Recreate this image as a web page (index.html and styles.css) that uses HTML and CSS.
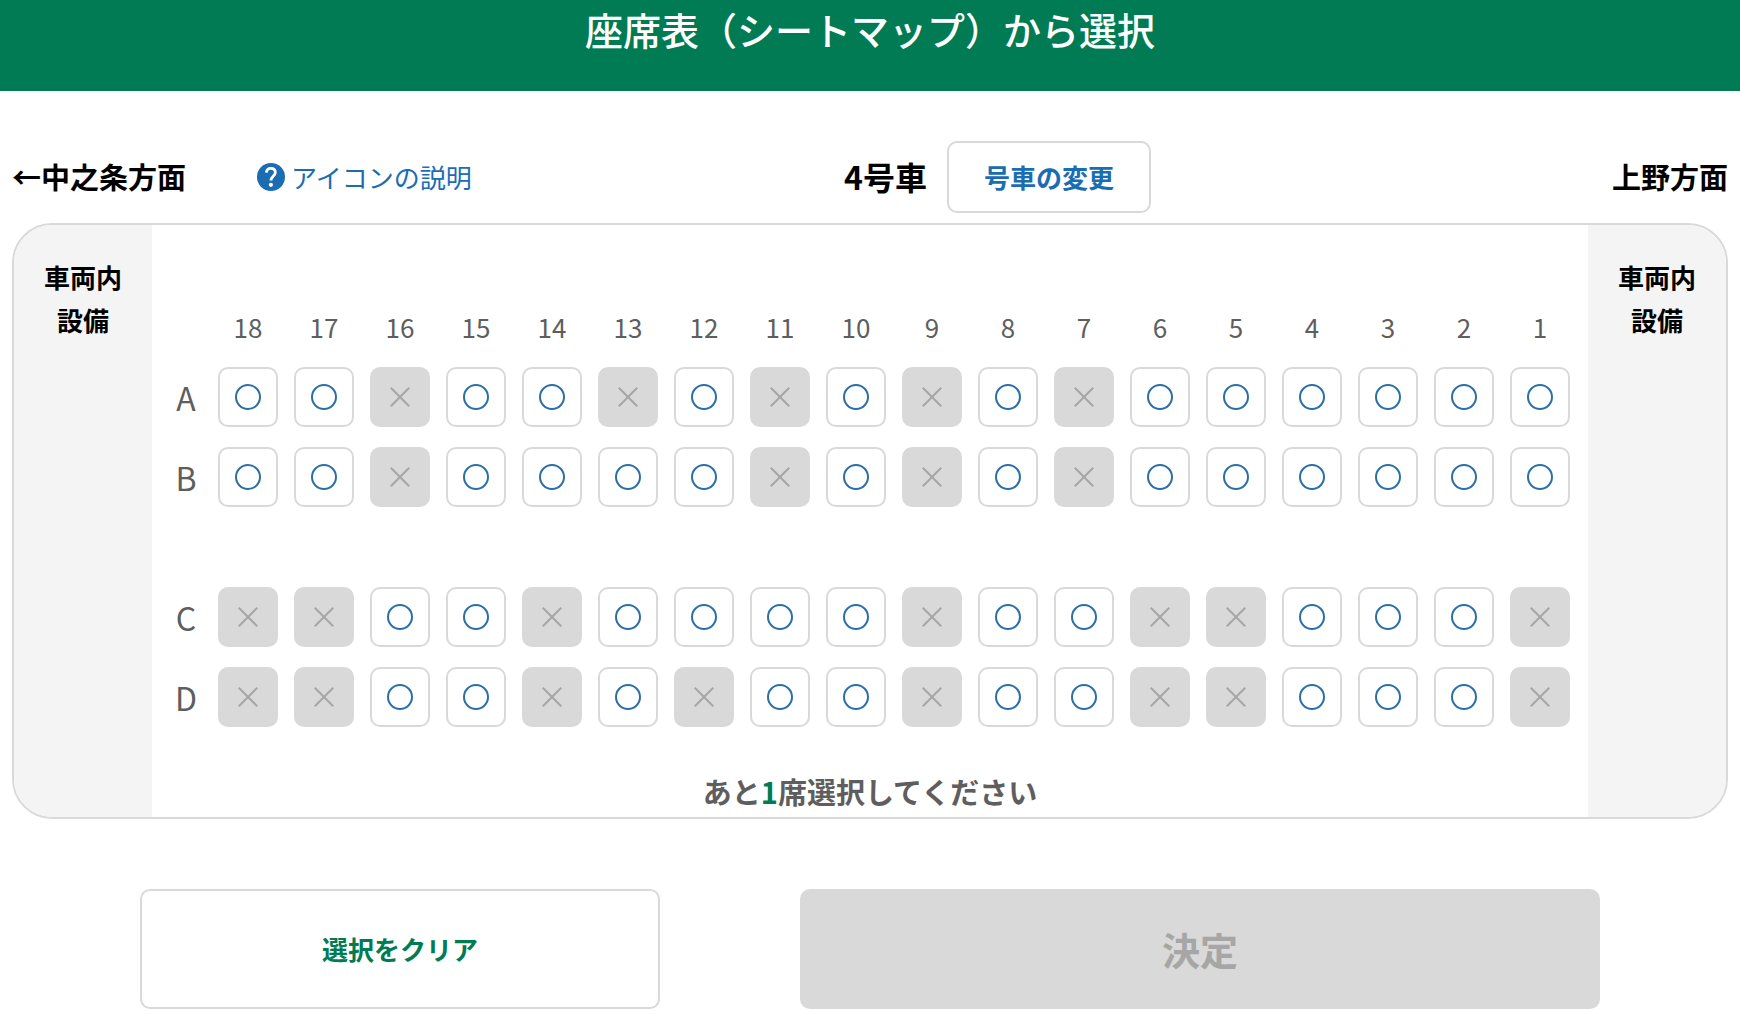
FILE: index.html
```html
<!DOCTYPE html>
<html lang="ja">
<head>
<meta charset="utf-8">
<meta name="viewport" content="width=device-width, initial-scale=1">
<title>座席表（シートマップ）から選択</title>
<link rel="stylesheet" href="styles.css">
</head>
<body>
<header class="page-header">
  <h1 class="page-title">座席表（シートマップ）から選択</h1>
</header>
<main class="content">
  <div class="car-bar">
    <div class="car-bar-left">
      <span class="direction">←中之条方面</span>
      <a class="icon-help" href="#">
        <svg class="help-mark" viewBox="0 0 28 28" aria-hidden="true">
          <circle cx="14" cy="14" r="14" fill="#1a6db3"/>
          <path d="M9.4 9.6C9.5 7 11.2 5.3 13.9 5.3S18.3 6.9 18.3 9.4C18.3 12.8 13.9 13.2 13.9 17.6" fill="none" stroke="#fff" stroke-width="2.8"/>
          <circle cx="13.9" cy="21.8" r="2.1" fill="#fff"/>
        </svg>
        <span>アイコンの説明</span>
      </a>
    </div>
    <div class="car-bar-right">
      <h2 class="car-name">4号車</h2>
      <button class="btn btn-car" type="button">号車の変更</button>
      <span class="direction direction-end">上野方面</span>
    </div>
  </div>

  <section class="car">
    <div class="facility">車両内<br>設備</div>
    <div class="cabin">
      <table class="seats">
        <thead>
          <tr><td></td><th scope="col">18</th><th scope="col">17</th><th scope="col">16</th><th scope="col">15</th><th scope="col">14</th><th scope="col">13</th><th scope="col">12</th><th scope="col">11</th><th scope="col">10</th><th scope="col">9</th><th scope="col">8</th><th scope="col">7</th><th scope="col">6</th><th scope="col">5</th><th scope="col">4</th><th scope="col">3</th><th scope="col">2</th><th scope="col">1</th></tr>
        </thead>
        <tbody>
          <tr>
            <th class="row-name" scope="row">A</th>
            <td><button class="seat" type="button" aria-label="18A"></button></td>
            <td><button class="seat" type="button" aria-label="17A"></button></td>
            <td><button class="seat" type="button" aria-label="16A" disabled></button></td>
            <td><button class="seat" type="button" aria-label="15A"></button></td>
            <td><button class="seat" type="button" aria-label="14A"></button></td>
            <td><button class="seat" type="button" aria-label="13A" disabled></button></td>
            <td><button class="seat" type="button" aria-label="12A"></button></td>
            <td><button class="seat" type="button" aria-label="11A" disabled></button></td>
            <td><button class="seat" type="button" aria-label="10A"></button></td>
            <td><button class="seat" type="button" aria-label="9A" disabled></button></td>
            <td><button class="seat" type="button" aria-label="8A"></button></td>
            <td><button class="seat" type="button" aria-label="7A" disabled></button></td>
            <td><button class="seat" type="button" aria-label="6A"></button></td>
            <td><button class="seat" type="button" aria-label="5A"></button></td>
            <td><button class="seat" type="button" aria-label="4A"></button></td>
            <td><button class="seat" type="button" aria-label="3A"></button></td>
            <td><button class="seat" type="button" aria-label="2A"></button></td>
            <td><button class="seat" type="button" aria-label="1A"></button></td>
          </tr>
          <tr>
            <th class="row-name" scope="row">B</th>
            <td><button class="seat" type="button" aria-label="18B"></button></td>
            <td><button class="seat" type="button" aria-label="17B"></button></td>
            <td><button class="seat" type="button" aria-label="16B" disabled></button></td>
            <td><button class="seat" type="button" aria-label="15B"></button></td>
            <td><button class="seat" type="button" aria-label="14B"></button></td>
            <td><button class="seat" type="button" aria-label="13B"></button></td>
            <td><button class="seat" type="button" aria-label="12B"></button></td>
            <td><button class="seat" type="button" aria-label="11B" disabled></button></td>
            <td><button class="seat" type="button" aria-label="10B"></button></td>
            <td><button class="seat" type="button" aria-label="9B" disabled></button></td>
            <td><button class="seat" type="button" aria-label="8B"></button></td>
            <td><button class="seat" type="button" aria-label="7B" disabled></button></td>
            <td><button class="seat" type="button" aria-label="6B"></button></td>
            <td><button class="seat" type="button" aria-label="5B"></button></td>
            <td><button class="seat" type="button" aria-label="4B"></button></td>
            <td><button class="seat" type="button" aria-label="3B"></button></td>
            <td><button class="seat" type="button" aria-label="2B"></button></td>
            <td><button class="seat" type="button" aria-label="1B"></button></td>
          </tr>
          <tr><td class="aisle" colspan="19"></td></tr>
          <tr>
            <th class="row-name" scope="row">C</th>
            <td><button class="seat" type="button" aria-label="18C" disabled></button></td>
            <td><button class="seat" type="button" aria-label="17C" disabled></button></td>
            <td><button class="seat" type="button" aria-label="16C"></button></td>
            <td><button class="seat" type="button" aria-label="15C"></button></td>
            <td><button class="seat" type="button" aria-label="14C" disabled></button></td>
            <td><button class="seat" type="button" aria-label="13C"></button></td>
            <td><button class="seat" type="button" aria-label="12C"></button></td>
            <td><button class="seat" type="button" aria-label="11C"></button></td>
            <td><button class="seat" type="button" aria-label="10C"></button></td>
            <td><button class="seat" type="button" aria-label="9C" disabled></button></td>
            <td><button class="seat" type="button" aria-label="8C"></button></td>
            <td><button class="seat" type="button" aria-label="7C"></button></td>
            <td><button class="seat" type="button" aria-label="6C" disabled></button></td>
            <td><button class="seat" type="button" aria-label="5C" disabled></button></td>
            <td><button class="seat" type="button" aria-label="4C"></button></td>
            <td><button class="seat" type="button" aria-label="3C"></button></td>
            <td><button class="seat" type="button" aria-label="2C"></button></td>
            <td><button class="seat" type="button" aria-label="1C" disabled></button></td>
          </tr>
          <tr>
            <th class="row-name" scope="row">D</th>
            <td><button class="seat" type="button" aria-label="18D" disabled></button></td>
            <td><button class="seat" type="button" aria-label="17D" disabled></button></td>
            <td><button class="seat" type="button" aria-label="16D"></button></td>
            <td><button class="seat" type="button" aria-label="15D"></button></td>
            <td><button class="seat" type="button" aria-label="14D" disabled></button></td>
            <td><button class="seat" type="button" aria-label="13D"></button></td>
            <td><button class="seat" type="button" aria-label="12D" disabled></button></td>
            <td><button class="seat" type="button" aria-label="11D"></button></td>
            <td><button class="seat" type="button" aria-label="10D"></button></td>
            <td><button class="seat" type="button" aria-label="9D" disabled></button></td>
            <td><button class="seat" type="button" aria-label="8D"></button></td>
            <td><button class="seat" type="button" aria-label="7D"></button></td>
            <td><button class="seat" type="button" aria-label="6D" disabled></button></td>
            <td><button class="seat" type="button" aria-label="5D" disabled></button></td>
            <td><button class="seat" type="button" aria-label="4D"></button></td>
            <td><button class="seat" type="button" aria-label="3D"></button></td>
            <td><button class="seat" type="button" aria-label="2D"></button></td>
            <td><button class="seat" type="button" aria-label="1D" disabled></button></td>
          </tr>
        </tbody>
      </table>
      <p class="remaining">あと<em class="count">1</em>席選択してください</p>
    </div>
    <div class="facility">車両内<br>設備</div>
  </section>

  <div class="actions">
    <button class="btn btn-clear" type="button">選択をクリア</button>
    <button class="btn btn-submit" type="button" disabled>決定</button>
  </div>
</main>
</body>
</html>
```
FILE: styles.css
```css
*,
*::before,
*::after {
  box-sizing: border-box;
}

body {
  margin: 0;
  background: #fff;
  color: #000;
  font-family: "Noto Sans CJK JP", sans-serif;
  font-size: 26px;
}

h1,
h2,
p {
  margin: 0;
}

button {
  margin: 0;
  padding: 0;
  font-family: inherit;
  cursor: pointer;
}

button:disabled {
  cursor: default;
}

.page-header {
  padding-bottom: 34px;
  background: #007b53;
  color: #fff;
  text-align: center;
}

.page-title {
  font-size: 38px;
  font-weight: 500;
  line-height: 57px;
}

.content {
  padding: 50px 12px 11px;
}

/* Direction labels, help link and car selector */
.car-bar {
  display: grid;
  grid-template-columns: 48fr 51fr;
  align-items: center;
  margin-bottom: 10px;
  white-space: nowrap;
}

.car-bar-left,
.car-bar-right {
  display: flex;
  align-items: center;
}

.car-bar-left {
  gap: 71px;
}

.car-bar-right {
  gap: 20px;
}

.direction {
  padding-bottom: 2px;
  font-size: 29px;
  font-weight: 700;
  line-height: 40px;
}

.direction-end {
  margin-left: auto;
}

.icon-help {
  display: flex;
  align-items: center;
  gap: 6px;
  color: #1a6db3;
  line-height: 40px;
  text-decoration: none;
}

.help-mark {
  width: 28px;
  height: 28px;
}

.car-name {
  padding-bottom: 2px;
  font-size: 32px;
  font-weight: 700;
  line-height: 40px;
}

.btn {
  padding: 0 0 2px;
  border: 2px solid #d9d9d9;
  border-radius: 10px;
  background: #fff;
  font-size: 26px;
  font-weight: 700;
}

.btn-car {
  height: 72px;
  padding: 0 35px 2px;
  color: #1a6db3;
}

/* Car outline with the cabin between two facility areas */
.car {
  display: flex;
  overflow: hidden;
  border: 2px solid #d9d9d9;
  border-radius: 40px;
}

.facility {
  flex: 0 0 138px;
  padding-top: 30px;
  background: #f4f4f4;
  font-weight: 700;
  line-height: 43px;
  text-align: center;
}

.cabin {
  flex: 1;
  padding-top: 66px;
}

.seats {
  margin: 0 auto;
  border-spacing: 16px 20px;
  color: #5e5e5e;
}

.seats th,
.seats td {
  padding: 0;
  font-weight: 400;
  line-height: 32px;
}

.seats thead th {
  padding-bottom: 4px;
}

.seats .row-name {
  width: 32px;
  font-size: 32px;
}

.seats .aisle {
  height: 40px;
}

.seat {
  display: grid;
  place-items: center;
  width: 60px;
  height: 60px;
  border: 2px solid #d9d9d9;
  border-radius: 10px;
  background: #fff;
}

.seat::before {
  content: "";
  grid-area: 1 / 1;
  width: 26px;
  height: 26px;
  border: 2px solid #2a6fa8;
  border-radius: 50%;
}

.seat:disabled {
  background: #d9d9d9;
}

.seat:disabled::before,
.seat:disabled::after {
  content: "";
  grid-area: 1 / 1;
  width: 26px;
  height: 2px;
  border: 0;
  border-radius: 0;
  background: #a6a6a6;
  transform: rotate(45deg);
}

.seat:disabled::after {
  transform: rotate(-45deg);
}

.remaining {
  margin-top: 22px;
  padding-bottom: 4px;
  color: #5e5e5e;
  font-size: 29px;
  font-weight: 700;
  line-height: 44px;
  text-align: center;
}

.count {
  color: #007b53;
  font-style: normal;
}

/* Bottom buttons */
.actions {
  display: grid;
  grid-template-columns: 520fr 800fr;
  gap: 140px;
  margin-top: 70px;
  padding: 0 128px;
}

.btn-clear,
.btn-submit {
  height: 120px;
}

.btn-clear {
  color: #007b53;
}

.btn-submit {
  background: #d9d9d9;
  color: #a6a6a6;
  font-size: 38px;
}
```
